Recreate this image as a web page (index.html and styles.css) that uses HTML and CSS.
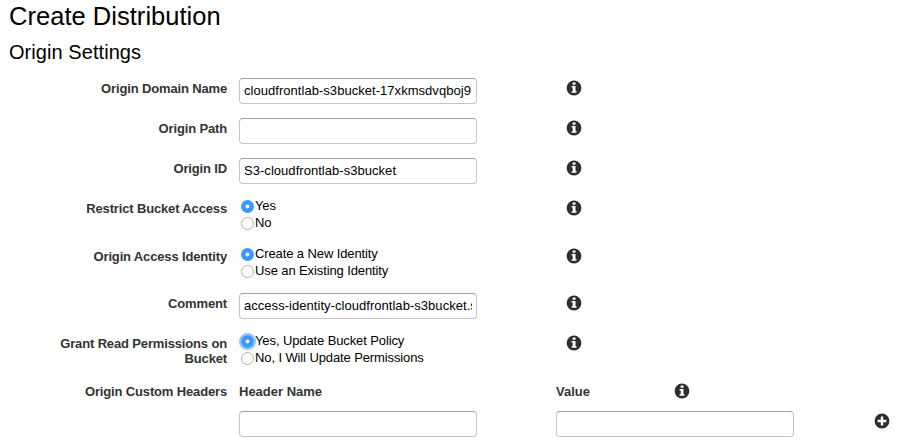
FILE: index.html
```
<!DOCTYPE html>
<html lang="en">
<head>
<meta charset="utf-8">
<title>Create Distribution</title>
<link rel="stylesheet" href="styles.css">
</head>
<body>
<svg class="defs" width="0" height="0" aria-hidden="true">
  <symbol id="info" viewBox="0 0 16 16">
    <circle cx="8" cy="8" r="7.4" fill="#2d2d2d"/>
    <path d="M6.6 2.6h2.9v2.1H6.6zM5.6 6.1h3.9v5.1h1v1.5H5.6v-1.5h1.1V7.6H5.6z" fill="#fff"/>
  </symbol>
  <symbol id="plus" viewBox="0 0 16 16">
    <circle cx="8" cy="8" r="7.4" fill="#2d2d2d"/>
    <path d="M6.8 3.6h2.4v3.2h3.2v2.4H9.2v3.2H6.8V9.2H3.6V6.8h3.2z" fill="#fff"/>
  </symbol>
</svg>
<h1 class="title">Create Distribution</h1>
<h2 class="subtitle">Origin Settings</h2>
<form class="form">
  <div class="row">
    <label class="label">Origin Domain Name</label>
    <div><input class="text" type="text" value="cloudfrontlab-s3bucket-17xkmsdvqboj9"></div>
    <svg class="icon"><use href="#info"/></svg>
  </div>
  <div class="row">
    <label class="label">Origin Path</label>
    <div><input class="text" type="text"></div>
    <svg class="icon"><use href="#info"/></svg>
  </div>
  <div class="row">
    <label class="label">Origin ID</label>
    <div><input class="text" type="text" value="S3-cloudfrontlab-s3bucket"></div>
    <svg class="icon"><use href="#info"/></svg>
  </div>
  <div class="row row-choice">
    <span class="label">Restrict Bucket Access</span>
    <div class="choices">
      <label class="choice"><input class="radio" type="radio" name="restrict" checked>Yes</label>
      <label class="choice"><input class="radio" type="radio" name="restrict">No</label>
    </div>
    <svg class="icon"><use href="#info"/></svg>
  </div>
  <div class="row row-choice">
    <span class="label">Origin Access Identity</span>
    <div class="choices">
      <label class="choice"><input class="radio" type="radio" name="identity" checked>Create a New Identity</label>
      <label class="choice"><input class="radio" type="radio" name="identity">Use an Existing Identity</label>
    </div>
    <svg class="icon"><use href="#info"/></svg>
  </div>
  <div class="row">
    <label class="label">Comment</label>
    <div><input class="text" type="text" value="access-identity-cloudfrontlab-s3bucket.s3.amazonaws.com"></div>
    <svg class="icon"><use href="#info"/></svg>
  </div>
  <div class="row row-choice">
    <span class="label">Grant Read Permissions on Bucket</span>
    <div class="choices">
      <label class="choice"><input class="radio radio-focus" type="radio" name="grant" checked>Yes, Update Bucket Policy</label>
      <label class="choice"><input class="radio" type="radio" name="grant">No, I Will Update Permissions</label>
    </div>
    <svg class="icon"><use href="#info"/></svg>
  </div>
  <div class="row row-headers">
    <span class="label">Origin Custom Headers</span>
    <span class="label label-left">Header Name</span>
    <span class="label label-left">Value</span>
    <svg class="icon"><use href="#info"/></svg>
  </div>
  <div class="row row-values">
    <span></span>
    <input class="text" type="text">
    <input class="text" type="text">
    <svg class="icon icon-plus"><use href="#plus"/></svg>
  </div>
</form>
</body>
</html>
```
FILE: styles.css
```
* { box-sizing: border-box; }

body {
  margin: 0;
  height: 447px;
  overflow: hidden;
  background: #fff;
  color: #000;
  font: 13px/17px "Liberation Sans", Arial, sans-serif;
}

.defs { display: block; }

.title {
  margin: 0;
  padding: 1px 0 0 9px;
  font-size: 25.5px;
  line-height: 30px;
  font-weight: 400;
  letter-spacing: 0.03px;
}

.subtitle {
  margin: 0;
  padding: 7px 0 0 9px;
  height: 47px;
  font-size: 20px;
  line-height: 28px;
  font-weight: 400;
  letter-spacing: 0.06px;
}

.row {
  display: grid;
  grid-template-columns: 227px 238px 16px;
  column-gap: 12px;
  height: 40px;
  align-items: start;
}

.row > .icon { margin-left: 77px; }
.row-choice { height: 47.6px; }
.row-headers { grid-template-columns: 227px 305px 107px 16px; height: 30px; }
.row-headers > .icon { margin-left: -1px; }
.row-values { grid-template-columns: 227px 238px 238px 16px; }
.row-values > :nth-child(3) { margin-left: 67px; }
.row-values > .icon-plus { margin: 2px 0 0 135px; }

.label {
  padding: 3px 0 0 50px;
  text-align: right;
  font-weight: 700;
  line-height: 15px;
  letter-spacing: -0.15px;
  color: #333;
}

.label-left { padding-left: 0; text-align: left; letter-spacing: 0; }

.text {
  display: block;
  width: 238px;
  height: 26px;
  margin: 0;
  padding: 0 4px 1px;
  border: 1px solid #c4c4c4;
  border-top-color: #a0a0a0;
  border-radius: 4px;
  background: #fff;
  color: #000;
  font: inherit;
  letter-spacing: 0.04px;
  outline: none;
}

.choices { margin-top: -1px; }

.choice {
  display: flex;
  align-items: center;
  height: 17px;
  letter-spacing: -0.11px;
}

.radio {
  appearance: none;
  width: 13px;
  height: 13px;
  margin: 2px 1px 0 2px;
  border: 1px solid #b0b0b0;
  border-radius: 50%;
  background: #fff;
}

.radio:checked {
  border: 0;
  background: radial-gradient(circle, #fff 0 1.5px, #3b99fc 2.3px);
}

.radio-focus { box-shadow: 0 0 0 2px #8fc5fb; }

.icon {
  display: block;
  width: 16px;
  height: 16px;
  margin-top: 2px;
}
```
